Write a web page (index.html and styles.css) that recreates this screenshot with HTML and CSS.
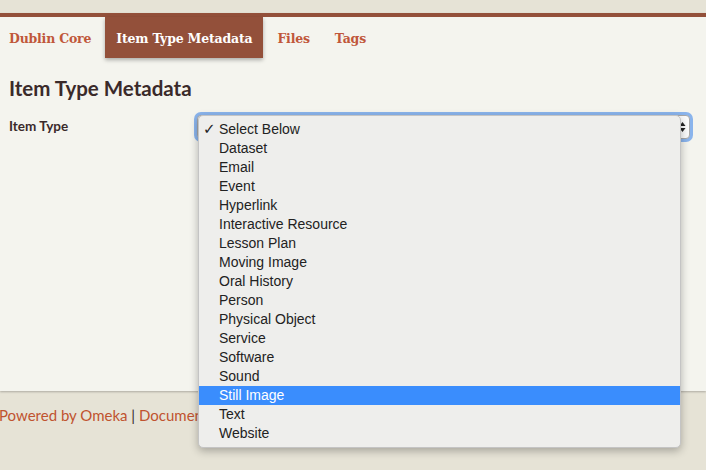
FILE: index.html
```html
<!DOCTYPE html>
<html>
<head>
<meta charset="utf-8">
<link rel="stylesheet" href="styles.css">
</head>
<body>
<header class="top"></header>
<main class="main">
  <nav class="tabs">
    <a class="tab first">Dublin Core</a>
    <a class="tab active">Item Type Metadata</a>
    <a class="tab">Files</a>
    <a class="tab">Tags</a>
  </nav>
  <section class="section">
    <h2 class="heading">Item Type Metadata</h2>
    <div class="field">
      <label class="label">Item Type</label>
      <div class="select">
        <span class="arrows">
          <svg width="7" height="12" viewBox="0 0 7 12"><path d="M3.5 1 L6.5 5 H0.5 Z M3.5 11 L6.5 7 H0.5 Z" fill="#222"/></svg>
        </span>
        <ul class="menu">
          <li class="opt checked"><span class="check">✓</span>Select Below</li>
          <li class="opt">Dataset</li>
          <li class="opt">Email</li>
          <li class="opt">Event</li>
          <li class="opt">Hyperlink</li>
          <li class="opt">Interactive Resource</li>
          <li class="opt">Lesson Plan</li>
          <li class="opt">Moving Image</li>
          <li class="opt">Oral History</li>
          <li class="opt">Person</li>
          <li class="opt">Physical Object</li>
          <li class="opt">Service</li>
          <li class="opt">Software</li>
          <li class="opt">Sound</li>
          <li class="opt hl">Still Image</li>
          <li class="opt">Text</li>
          <li class="opt">Website</li>
        </ul>
      </div>
    </div>
  </section>
</main>
<footer class="footer">
  <p class="links"><a class="flink">Powered by Omeka</a> <span class="sep">|</span> <a class="flink">Documentat</a></p>
</footer>
</body>
</html>
```
FILE: styles.css
```css
html, body {
  margin: 0;
  padding: 0;
}
body {
  background: #e6e3d6;
  width: 706px;
  height: 470px;
  overflow: hidden;
  font-family: "Lato", "Liberation Sans", sans-serif;
}
.top {
  height: 13px;
}
.main {
  background: #f4f4ee;
  border-top: 4px solid #93503a;
  height: 374px;
  box-shadow: 0 1px 2px rgba(0,0,0,0.25);
  position: relative;
  z-index: 1;
}
.tabs {
  display: flex;
  gap: 3px;
  height: 41px;
}
.tab {
  display: flex;
  align-items: center;
  padding: 2px 11px 0;
  font-family: "DejaVu Serif", "Liberation Serif", serif;
  font-weight: bold;
  font-size: 12.5px;
  color: #c0573a;
  letter-spacing: -0.2px;
}
.tab.first {
  padding-left: 9px;
}
.tab.active {
  background: #93503a;
  color: #ffffff;
  box-shadow: 0 2px 4px rgba(0,0,0,0.3);
}
.section {
  padding: 0 9px;
}
.heading {
  margin: 18px 0 0;
  font-size: 20.5px;
  line-height: 24px;
  font-weight: bold;
  color: #3a2a2a;
}
.field {
  display: flex;
  margin-top: 18px;
}
.label {
  width: 188px;
  font-weight: bold;
  font-size: 13.5px;
  line-height: 16px;
  color: #3a2a2a;
}
.select {
  position: relative;
  width: 491px;
  height: 22px;
  margin-top: -3px;
  border: 1px solid #a8a8a8;
  border-radius: 4px;
  background: #fbfbfb;
  box-shadow: 0 0 0 3px #8ab4ec;
}
.arrows {
  position: absolute;
  right: 3px;
  top: 5px;
  display: flex;
}
.menu {
  position: absolute;
  left: 0;
  top: -1px;
  width: 481px;
  margin: 0;
  padding: 4px 0;
  list-style: none;
  background: #eeeeec;
  border: 1px solid #c4c4c4;
  border-radius: 5px;
  box-shadow: 0 3px 8px rgba(0,0,0,0.28);
  font-family: "Liberation Sans", Arial, sans-serif;
  font-size: 14px;
  color: #222;
}
.opt {
  height: 19px;
  line-height: 19px;
  padding-left: 20px;
  position: relative;
}
.check {
  position: absolute;
  left: 4px;
  font-family: "DejaVu Sans", sans-serif;
  font-size: 15px;
}
.opt.hl {
  background: #3a8dfd;
  color: #ffffff;
}
.footer {
  padding-top: 14px;
}
.links {
  margin: 0;
  margin-left: -1px;
  font-size: 15px;
  line-height: 20px;
  color: #3a2a2a;
  white-space: nowrap;
}
.flink {
  color: #c0532f;
}
```
